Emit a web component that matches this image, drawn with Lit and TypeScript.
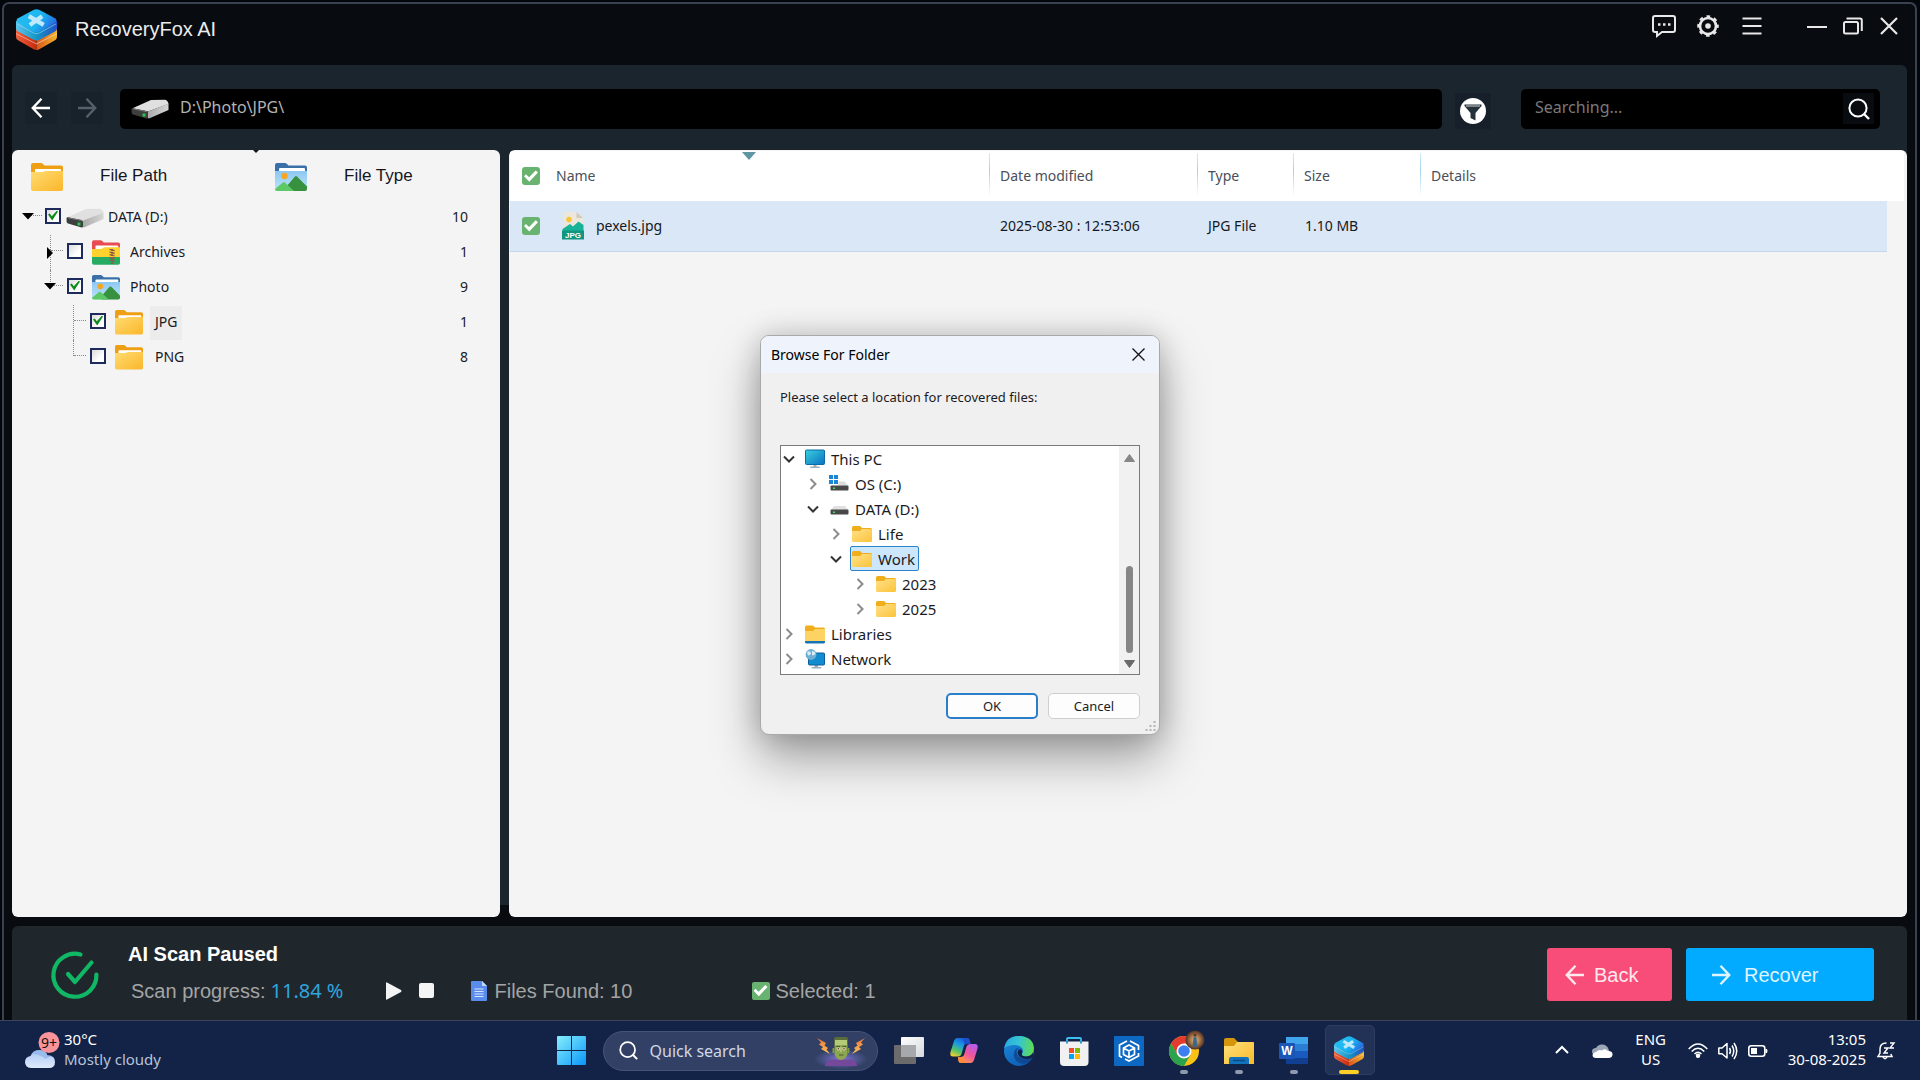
import { LitElement, html, css, svg, nothing, type TemplateResult } from "lit";
import { customElement, property, state } from "lit/decorators.js";
import { classMap } from "lit/directives/class-map.js";

/* ---------- icons ---------- */

const logo = (size: number) => html`<svg width=${size} height=${size} viewBox="0 0 40 40" aria-hidden="true">
  <defs>
    <linearGradient id="lg-red" x1="0" x2="1"><stop offset="0" stop-color="#f0603c" /><stop offset="1" stop-color="#c92a0c" /></linearGradient>
    <linearGradient id="lg-yel" x1="0" x2="1"><stop offset="0" stop-color="#d8541a" /><stop offset="1" stop-color="#f3b62c" /></linearGradient>
    <linearGradient id="lg-side" x1="0" x2="1"><stop offset="0" stop-color="#59c6ee" /><stop offset=".5" stop-color="#1795c4" /><stop offset="1" stop-color="#2350c8" /></linearGradient>
    <linearGradient id="lg-top" x1="0" x2="1" y1=".3" y2=".7"><stop offset="0" stop-color="#28bdf2" /><stop offset=".55" stop-color="#18b4f0" /><stop offset="1" stop-color="#2b5fe0" /></linearGradient>
  </defs>
  <path d="M0 19 L20 28 V40 Q18.500 40 16 38.500 L2 30.500 Q0 29.500 0 27 Z" fill="url(#lg-red)" />
  <path d="M40 19 L20 28 V40 Q21.500 40 24 38.500 L38 30.500 Q40 29.500 40 27 Z" fill="url(#lg-yel)" />
  <path d="M0 24 L20 34 L40 24" stroke="#fff" stroke-opacity=".45" fill="none" />
  <path d="M0 12 L20 6 L40 12 V19 Q40 21 38 22 L23 30 Q20 31.500 17 30 L2 22 Q0 21 0 19 Z" fill="url(#lg-side)" />
  <path d="M2 9 L17 1 Q20 -.5 23 1 L38 9 Q41 11 38 13.500 L23 22 Q20 23.500 17 22 L2 13.500 Q-1 11 2 9 Z" fill="url(#lg-top)" />
  <path d="M1 14.500 L17 23.300 Q20 24.700 23 23.300 L39 14.500" stroke="#8fe3ff" stroke-opacity=".6" fill="none" />
  <path d="M12.500 7 L27 15.500 M25.500 7 L13.500 15.500" stroke="#bfe9fb" stroke-width="4.200" />
</svg>`;

const driveIcon = html`<svg width="38" height="20" viewBox="0 0 38 20" aria-hidden="true">
  <defs><linearGradient id="dr" x1="0" x2="1"><stop offset="0" stop-color="#a9a9a9" /><stop offset="1" stop-color="#d6d6d6" /></linearGradient></defs>
  <path d="M1 9.500 L20 1 L34 .800 Q37 1.500 37.500 5 L17 12.500 Z" fill="#e0e0e0" />
  <path d="M17 12.500 L37.500 4.800 V11 L18 19.500 Q16.500 19.500 16.500 17 Z" fill="url(#dr)" />
  <path d="M.500 10 Q.700 9 2 9.300 L15.500 12 Q17 12.500 17 14 V18.500 Q17 19.700 15.500 19.400 L2 15.500 Q.600 15 .600 13.500 Z" fill="#3c3f3e" />
  <path d="M2 9.800 L16 12.700" stroke="#777" fill="none" />
  <rect x="11.500" y="14.500" width="3" height="3" fill="#2cc44c" />
</svg>`;

const folderIcon = (w: number) => html`<svg width=${w} height=${(w * 7) / 8} viewBox="0 0 32 28" aria-hidden="true">
  <defs><linearGradient id="fo" x1="0" y1="0" x2="1" y2="1"><stop offset="0" stop-color="#ffdc72" /><stop offset="1" stop-color="#fbb62a" /></linearGradient></defs>
  <path d="M0 2 Q0 0 2 0 H10 Q11 0 12 1 L13.500 2.500 H30 Q32 2.500 32 4.500 V20 H0 Z" fill="#ee9f14" />
  <rect x="4" y="6" width="26" height="6" rx="1" fill="#fff" />
  <path d="M0 9 H11 Q12 9 13 8.500 Q14 8 15 8 H32 V26 Q32 28 30 28 H2 Q0 28 0 26 Z" fill="url(#fo)" />
</svg>`;

const photoIcon = (w: number) => html`<svg width=${w} height=${(w * 7) / 8} viewBox="0 0 32 28" aria-hidden="true">
  <defs><linearGradient id="ph" x1="0" y1="0" x2="0" y2="1"><stop offset="0" stop-color="#8cc8f2" /><stop offset="1" stop-color="#bfe4fb" /></linearGradient></defs>
  <path d="M0 2 Q0 0 2 0 H10 Q11 0 12 1 L13.500 2.500 H30 Q32 2.500 32 4.500 V12 H0 Z" fill="#3a70a8" />
  <rect x="4" y="5" width="26" height="6" rx="1" fill="#fff" />
  <path d="M0 8 H32 V26 Q32 28 30 28 H2 Q0 28 0 26 Z" fill="url(#ph)" />
  <circle cx="9.500" cy="13" r="3.200" fill="#f5a623" />
  <path d="M11 24 L20 13.500 Q21 12.500 22 13.500 L32 23.500 V26 Q32 28 30 28 H11 Z" fill="#38913f" />
  <path d="M0 26 L8 19.500 Q9 18.800 10 19.500 L19 28 H2 Q0 28 0 26 Z" fill="#5cc866" />
</svg>`;

const archiveIcon = html`<svg width="28" height="25" viewBox="0 0 32 28" aria-hidden="true">
  <path d="M0 2 Q0 0 2 0 H10 Q11 0 12 1 L13.500 2.500 H30 Q32 2.500 32 4.500 V12 H0 Z" fill="#e84c52" />
  <rect x="4" y="6" width="26" height="6" rx="1" fill="#fff" />
  <path d="M0 10 H11 L14 8 H32 V19 H0 Z" fill="#fdd22e" />
  <path d="M0 19 H32 V26 Q32 28 30 28 H2 Q0 28 0 26 Z" fill="#27ab63" />
  <path d="M20 10.500 L26 12 M20 13.500 L26 15 M20 16.500 L26 18 M20 19.500 L26 21 M20 22.500 L26 24" stroke="#8a5a44" stroke-width="1.400" />
  <path d="M23 10 V27" stroke="#8a5a44" stroke-width="2.500" stroke-dasharray="2 1" />
</svg>`;

const arrow = (dir: "left" | "right", w = 20) => html`<svg width=${w} height="20" viewBox="0 0 20 20" aria-hidden="true" fill="none" stroke="currentColor" stroke-width="2.400">
  ${dir === "left" ? svg`<path d="M10.500 .800 L1.800 10 L10.500 19.200 M1.800 10 H19" />` : svg`<path d="M9.500 .800 L18.200 10 L9.500 19.200 M18.200 10 H1" />`}
</svg>`;

const magnifier = (s: number, w: number) => html`<svg width=${s} height=${s} viewBox="0 0 22 22" aria-hidden="true" fill="none" stroke="currentColor" stroke-width=${w}>
  <circle cx="10" cy="10" r="8.600" /><path d="M16 16 L21 21" stroke-width=${w + 0.4} />
</svg>`;

const jpgIcon = html`<svg width="22" height="28" viewBox="0 0 22 28" aria-hidden="true">
  <path d="M2 0 H14.500 L21 6 V22 H2 Z" fill="#ece6dc" /><path d="M14.500 0 L21 6 H14.500 Z" fill="#d3cabd" />
  <circle cx="7" cy="7.500" r="2.700" fill="#f8c630" />
  <path d="M.500 20 V17 L8 12 L11 14.500 L16.500 9.500 L21.500 13 V20 Z" fill="#17b298" />
  <path d="M0 18.500 H22 V27.500 H0 Z" fill="#12957e" />
  <text x="11" y="26" font-family="Liberation Sans, sans-serif" font-weight="700" font-size="8" fill="#fff" text-anchor="middle">JPG</text>
</svg>`;

/* ---------- folder-picker icons ---------- */

const pickIcons: Record<string, TemplateResult> = {
  folder: html`<svg width="20" height="18" viewBox="0 0 20 18" aria-hidden="true">
    <defs><linearGradient id="pf" x1="0" y1="0" x2="1" y2="1"><stop offset="0" stop-color="#ffe08a" /><stop offset="1" stop-color="#fbc43a" /></linearGradient></defs>
    <path d="M0 2.500 Q0 1 1.500 1 H7.500 Q8.500 1 9 1.800 L10 3 H18.500 Q20 3 20 4.500 V10 H0 Z" fill="#f0ae1c" />
    <path d="M0 6 H8 L10 4 H18.500 Q20 4 20 5.500 V15.500 Q20 17 18.500 17 H1.500 Q0 17 0 15.500 Z" fill="url(#pf)" />
  </svg>`,
  pc: html`<svg width="20" height="20" viewBox="0 0 20 20" aria-hidden="true">
    <defs><linearGradient id="pc" x1="0" y1="0" x2="1" y2="1"><stop offset="0" stop-color="#3ad0df" /><stop offset="1" stop-color="#0a72c0" /></linearGradient></defs>
    <path d="M8.500 15 H11.500 V18 H8.500 Z" fill="#9fb0bd" /><rect x="5" y="17.500" width="10" height="1.500" rx=".7" fill="#9fb0bd" />
    <rect x=".500" y="1" width="19" height="14.500" rx="1" fill="url(#pc)" stroke="#0b6ba5" />
  </svg>`,
  os: html`<svg width="20" height="18" viewBox="0 0 20 18" aria-hidden="true">
    <path d="M0 0 H4 V4 H0 Z M5 0 H9 V4 H5 Z M0 5 H4 V9 H0 Z M5 5 H9 V9 H5 Z" fill="#1a86d8" />
    <path d="M9.500 10.500 V6.500 H15.500 L19 10.500 Z" fill="#dcdcdc" /><rect x="1.500" y="10.500" width="18" height="5" rx="1" fill="#484848" /><rect x="4" y="12.500" width="2" height="1.500" fill="#3be25a" />
  </svg>`,
  drive: html`<svg width="20" height="18" viewBox="0 0 20 18" aria-hidden="true">
    <path d="M2 10 L5 6 H16 L19 10 Z" fill="#e0e0e0" /><rect x="1.500" y="9.500" width="18" height="5" rx="1" fill="#484848" /><rect x="4" y="11.500" width="2" height="1.500" fill="#3be25a" />
  </svg>`,
  lib: html`<svg width="20" height="20" viewBox="0 0 20 20" aria-hidden="true">
    <path d="M0 3 Q0 1.500 1.500 1.500 H8 L10 3.500 H18.500 Q20 3.500 20 5 V12 H0 Z" fill="#f0ae1c" />
    <path d="M0 7 H8 L10 5 H20 V18 H0 Z" fill="#fdd463" /><path d="M0 17 H20 V18 Q20 19.500 18.500 19.500 H1.500 Q0 19.500 0 18 Z" fill="#1474b8" />
  </svg>`,
  net: html`<svg width="20" height="20" viewBox="0 0 20 20" aria-hidden="true">
    <path d="M9.500 16 H13 V18.500 H9.500 Z" fill="#9fb0bd" /><rect x="6.500" y="18" width="10" height="1.500" rx=".7" fill="#9fb0bd" />
    <rect x="3.500" y="4" width="16" height="12" rx="1" fill="#128bd0" stroke="#0c5f9c" />
    <circle cx="6" cy="5.500" r="5.400" fill="#6db0d4" /><path d="M2 3 Q5 1 6 4 Q6 6 3 6.500 Z M7 2 Q10 2 10.500 5 Q9 7 7 6 Z" fill="#d8ebf5" />
  </svg>`,
};

/* ---------- scan tree ---------- */

interface ScanNode { name: string; count: number; depth: number; checked: boolean; arrow: "open" | "closed" | ""; icon: TemplateResult; selected?: boolean; last?: boolean }

const scanNodes: ScanNode[] = [
  { name: "DATA (D:)", count: 10, depth: 0, checked: true, arrow: "open", icon: driveIcon },
  { name: "Archives", count: 1, depth: 1, checked: false, arrow: "closed", icon: archiveIcon },
  { name: "Photo", count: 9, depth: 1, checked: true, arrow: "open", icon: photoIcon(28), last: true },
  { name: "JPG", count: 1, depth: 2, checked: true, arrow: "", icon: folderIcon(28), selected: true },
  { name: "PNG", count: 8, depth: 2, checked: false, arrow: "", icon: folderIcon(28), last: true },
];

const baseStyles = css`
  *, *::before, *::after { box-sizing: border-box; }
  button, input { font: inherit; color: inherit; margin: 0; padding: 0; border: 0; background: none; }
  svg { display: block; flex: none; overflow: visible; }
`;

@customElement("scan-tree")
class ScanTree extends LitElement {
  static styles = [baseStyles, css`
    :host { display: flex; flex-direction: column; background: #f4f4f4; border-radius: 6px; overflow: hidden; color: #1a1a24; font: 15px/20px "Noto Sans", sans-serif; }
    .tabs { display: grid; grid-template-columns: 1fr 1fr; position: relative; }
    .tabs::after { content: ""; position: absolute; left: 50%; top: 0; margin-left: -3px; border: 3px solid transparent; border-top-color: #10161b; border-bottom: 0; }
    .tab { display: flex; align-items: center; gap: 37px; height: 50px; padding: 4px 0 0 19px; font: 17px/20px "Liberation Sans", sans-serif; color: #15151f; text-align: left; }
    .label { padding-bottom: 2px; }
    .list { list-style: none; margin: 0; padding: 0 32px 0 0; }
    .row { position: relative; display: flex; align-items: center; height: 35px; padding-left: 33px; }
    .d1 { padding-left: 55px; }
    .d2 { padding-left: 78px; }
    .twist { position: absolute; left: 10px; top: 12px; z-index: 1; }
    .d1 .twist { left: 32px; }
    .row::after { content: ""; position: absolute; border-top: 1px dotted #8a8a8a; width: 12px; left: 18px; top: 15px; }
    .d1::after { left: 39px; }
    .d2::after { left: 62px; }
    .d1::before, .d2::before { content: ""; position: absolute; border-left: 1px dotted #8a8a8a; top: 0; bottom: 0; left: 38px; }
    .d2::before { left: 61px; }
    .last::before { bottom: 19px; }
    .box { appearance: none; width: 16px; height: 16px; border: 2px solid #1f2a5c; background: linear-gradient(135deg, #dcdcdc, #fff 70%); flex: none; margin: 0 5px 4px 0; display: grid; }
    .d1 .box, .d2 .box { margin-right: 9px; }
    .box:checked::before { content: ""; margin: 1px; background: #0f8a1c; clip-path: polygon(0 40%, 18% 30%, 38% 58%, 88% 2%, 100% 10%, 42% 100%); }
    .name { display: flex; align-items: center; height: 34px; padding: 0 6px 1px 4px; font-size: 14px; }
    .d1 .name { margin-left: 6px; }
    .d2 .name { margin-left: 7px; padding: 0 5px 1px; }
    .selected { background: #ececec; }
    .count { margin-left: auto; font-size: 14px; padding-bottom: 1px; }
  `];

  render() {
    return html`
      <div class="tabs" role="tablist">
        <button class="tab" role="tab">${folderIcon(32)}<span class="label">File Path</span></button>
        <button class="tab" role="tab">${photoIcon(32)}<span class="label">File Type</span></button>
      </div>
      <ul class="list">
        ${scanNodes.map((n, i) => html`<li class=${classMap({ row: true, d1: n.depth === 1, d2: n.depth === 2, last: !!n.last })}>
          ${n.arrow === "open" ? html`<svg class="twist" width="12" height="8" viewBox="0 0 12 8"><path d="M0 1 H12 L6 7.500 Z" /></svg>` : nothing}
          ${n.arrow === "closed" ? html`<svg class="twist" width="12" height="12" viewBox="0 0 12 12"><path d="M3 0 V12 L9 6 Z" /></svg>` : nothing}
          <input class="box" type="checkbox" id="node-${i}" .checked=${n.checked} />
          ${n.icon}
          <label for="node-${i}" class=${classMap({ name: true, selected: !!n.selected })}>${n.name}</label>
          <span class="count">${n.count}</span>
        </li>`)}
      </ul>`;
  }
}

/* ---------- file table ---------- */

@customElement("file-table")
class FileTable extends LitElement {
  static styles = [baseStyles, css`
    :host { display: block; background: #f4f4f4; border-radius: 6px; overflow: hidden; font: 14px/20px "Noto Sans", sans-serif; padding: 1px 3px 0 1px; }
    .table { width: 100%; border-collapse: collapse; table-layout: fixed; }
    .c-check { width: 37px; } .c-name { width: 442px; } .c-date { width: 208px; } .c-type { width: 96px; } .c-size { width: 127px; } .c-edge { width: 17px; }
    .head { background: #fff; height: 50px; color: #4a4f5a; }
    .th { font-weight: 400; text-align: left; padding: 0 0 0 11px; position: relative; }
    .name { padding-left: 9px; }
    .th + .sep::before { content: ""; position: absolute; left: 0; top: 2px; bottom: 4px; width: 1px; background: linear-gradient(#d5edf6, #9fd6ee 40%, #fff); }
    .check { padding: 0 0 0 12px; }
    .box { appearance: none; width: 18px; height: 18px; border-radius: 3px; background: #68b36f; display: grid; }
    .box:checked::before { content: ""; margin: 3px 2px; background: #fff; clip-path: polygon(0 52%, 14% 36%, 36% 60%, 84% 4%, 100% 20%, 38% 98%); }
    .sort { position: absolute; left: 195px; top: 1px; }
    .file { height: 50px; color: #15181e; }
    .td { background: #dae7f6; border-bottom: 1px solid #c3d5ea; padding: 0 0 0 11px; }
    .first { padding-left: 12px; }
    .entry { display: flex; align-items: center; gap: 12px; padding-left: 4px; }
    .size { padding-left: 12px; }
  `];

  render() {
    return html`<table class="table">
      <colgroup><col class="c-check" /><col class="c-name" /><col class="c-date" /><col class="c-type" /><col class="c-size" /><col /><col class="c-edge" /></colgroup>
      <thead><tr class="head">
        <th class="check"><input class="box" type="checkbox" aria-label="Select all" checked /></th>
        <th class="th name">Name<svg class="sort" width="14" height="8" viewBox="0 0 14 8"><path d="M0 0 H14 L7 8 Z" fill="#5d95a3" /></svg></th>
        <th class="th sep">Date modified</th><th class="th sep">Type</th><th class="th sep">Size</th><th class="th sep">Details</th><td></td>
      </tr></thead>
      <tbody><tr class="file">
        <td class="td first"><input class="box" type="checkbox" aria-label="Select pexels.jpg" checked /></td>
        <td class="td"><span class="entry">${jpgIcon}pexels.jpg</span></td>
        <td class="td">2025-08-30 : 12:53:06</td><td class="td">JPG File</td><td class="td size">1.10 MB</td><td class="td"></td><td></td>
      </tr></tbody>
    </table>`;
  }
}

/* ---------- folder dialog ---------- */

const folders = [
  { name: "This PC", icon: "pc", depth: 0, open: true },
  { name: "OS (C:)", icon: "os", depth: 1, open: false },
  { name: "DATA (D:)", icon: "drive", depth: 1, open: true },
  { name: "Life", icon: "folder", depth: 2, open: false },
  { name: "Work", icon: "folder", depth: 2, open: true },
  { name: "2023", icon: "folder", depth: 3, open: false },
  { name: "2025", icon: "folder", depth: 3, open: false },
  { name: "Libraries", icon: "lib", depth: 0, open: false },
  { name: "Network", icon: "net", depth: 0, open: false },
];

@customElement("folder-dialog")
class FolderDialog extends LitElement {
  @state() private selected = "Work";

  static styles = [baseStyles, css`
    :host { display: block; box-sizing: border-box; width: 400px; border: 1px solid #a9a9ab; border-radius: 9px; background: #f0f0f0; overflow: hidden; color: #1b1b1f; font: 13px/20px "Noto Sans", sans-serif; box-shadow: 0 24px 48px rgba(0, 0, 0, .34), 0 0 28px rgba(0, 0, 0, .18); }
    .bar { display: flex; align-items: center; justify-content: space-between; height: 37px; padding: 0 14px 0 10px; background: #eff3fb; color: #000; }
    .title { margin: 0; font: 14px/20px "Noto Sans", sans-serif; }
    .x { width: 13px; height: 13px; }
    .body { position: relative; padding: 14px 19px 15px; }
    .prompt { margin: 0 0 38px; }
    .pane { display: flex; height: 230px; border: 1px solid #7a7a7a; background: #fff; }
    .list { list-style: none; margin: 0; padding: 0; flex: 1; font-size: 15px; }
    .row { display: flex; align-items: center; height: 25px; padding-left: 2px; }
    .chev { width: 12px; height: 12px; margin-right: 8px; color: #8c8c8c; }
    .open .chev { color: #333; }
    .pick { display: flex; align-items: center; gap: 6px; height: 25px; padding: 0 3px 0 1px; border: 1px solid transparent; border-radius: 2px; }
    .sel { background: #cce6fb; border-color: #2a83cc; }
    .i1 { padding-left: 26px; } .i2 { padding-left: 49px; } .i3 { padding-left: 73px; }
    .scroll { display: flex; flex-direction: column; align-items: center; width: 20px; padding: 8px 0 6px; background: #f1f1f1; }
    .thumb { width: 7px; height: 87px; border-radius: 4px; background: #868686; margin: auto 0 7px; }
    .actions { display: flex; justify-content: flex-end; gap: 10px; margin-top: 18px; }
    .btn { width: 92px; height: 26px; border: 1px solid #cfcfcf; border-radius: 5px; background: #fdfdfd; }
    .ok { border: 2px solid #2b7fca; }
    .grip { position: absolute; right: 3px; bottom: 2px; }
  `];

  render() {
    return html`
      <div class="bar"><h2 class="title">Browse For Folder</h2>
        <button class="x" aria-label="Close"><svg width="13" height="13" viewBox="0 0 13 13" stroke="#111" stroke-width="1.300"><path d="M.500 .500 L12.500 12.500 M12.500 .500 L.500 12.500" /></svg></button></div>
      <div class="body">
        <p class="prompt">Please select a location for recovered files:</p>
        <div class="pane">
          <ul class="list">${folders.map((f) => html`<li class=${classMap({ row: true, open: f.open, i1: f.depth === 1, i2: f.depth === 2, i3: f.depth === 3 })}>
            <svg class="chev" viewBox="0 0 12 12" fill="none" stroke="currentColor" stroke-width="2">${f.open ? svg`<path d="M1 3.500 L6 8.500 L11 3.500" />` : svg`<path d="M3.500 1 L8.500 6 L3.500 11" />`}</svg>
            <button class=${classMap({ pick: true, sel: f.name === this.selected })} @click=${() => (this.selected = f.name)}>${pickIcons[f.icon]}${f.name}</button>
          </li>`)}</ul>
          <div class="scroll">
            <svg width="11" height="8" viewBox="0 0 11 8"><path d="M5.500 .500 L10.500 7.500 H.500 Z" fill="#868686" stroke="#868686" stroke-linejoin="round" /></svg>
            <div class="thumb"></div>
            <svg width="11" height="8" viewBox="0 0 11 8"><path d="M5.500 7.500 L10.500 .500 H.500 Z" fill="#6a6a6a" stroke="#6a6a6a" stroke-linejoin="round" /></svg>
          </div>
        </div>
        <div class="actions"><button class="btn ok">OK</button><button class="btn">Cancel</button></div>
        <svg class="grip" width="11" height="11" viewBox="0 0 11 11" fill="#b4b4b4"><path d="M8.500 0 h2 v2 h-2 z M8.500 4 h2 v2 h-2 z M8.500 8 h2 v2 h-2 z M4.500 4 h2 v2 h-2 z M4.500 8 h2 v2 h-2 z M.500 8 h2 v2 h-2 z" /></svg>
      </div>`;
  }
}

/* ---------- taskbar ---------- */

const apps: { name: string; state: "" | "running" | "active"; icon: TemplateResult }[] = [
  { name: "Task view", state: "", icon: html`<svg width="30" height="30" viewBox="0 0 30 30">
      <defs><linearGradient id="tv" x1="0" y1="0" x2="1" y2="1"><stop offset="0" stop-color="#fff" /><stop offset="1" stop-color="#d6d8dc" /></linearGradient></defs>
      <rect x="0" y="9" width="22" height="19" rx="1" fill="#6b6b6b" /><rect x="7" y="1" width="23" height="20" rx="1" fill="url(#tv)" /><rect x="7" y="9" width="15" height="12" fill="#a6a8ab" /></svg>` },
  { name: "Copilot", state: "", icon: html`<svg width="30" height="30" viewBox="0 0 30 30">
      <defs>
        <linearGradient id="ca" x1=".7" y1="0" x2=".2" y2="1"><stop offset="0" stop-color="#1756d8" /><stop offset=".4" stop-color="#1b9de0" /><stop offset=".7" stop-color="#52c26a" /><stop offset="1" stop-color="#f4cf2c" /></linearGradient>
        <linearGradient id="cb" x1=".8" y1="0" x2=".2" y2="1"><stop offset="0" stop-color="#b25cf0" /><stop offset=".5" stop-color="#f0559a" /><stop offset="1" stop-color="#ff9b50" /></linearGradient>
      </defs>
      <path d="M8.500 2 H18 Q20 2 20.500 4 L21.500 7.500 H18 Q15.500 7.500 14.800 10 L12.500 18 Q11.800 20.500 9 20.500 H4 Q.500 20.500 1.500 16 L5 5 Q6 2 8.500 2 Z" fill="url(#ca)" />
      <path d="M21.500 27 H12 Q10 27 9.500 25 L9 21 H12 Q14.500 21 15.200 18.500 L17.500 10.500 Q18.200 8 21 8 H26 Q29.500 8 28.500 12.500 L25 24 Q24 27 21.500 27 Z" fill="url(#cb)" />
      <path d="M14 2 H18 Q20 2 20.500 4 L21.500 7.500 H18 Q16.500 7.500 15.500 9 Z" fill="#1c4fd0" /><path d="M9 21 H12 Q13.500 21 14.500 20 L16 27 H12 Q10 27 9.500 25 Z" fill="#ff8a3c" /></svg>` },
  { name: "Edge", state: "", icon: html`<svg width="30" height="30" viewBox="0 0 30 30">
      <defs>
        <linearGradient id="ea" x1="0" y1=".3" x2="1" y2=".4"><stop offset="0" stop-color="#2aa9e6" /><stop offset=".5" stop-color="#36c5d0" /><stop offset="1" stop-color="#5fdc52" /></linearGradient>
        <linearGradient id="eb" x1="0" y1="0" x2=".6" y2="1"><stop offset="0" stop-color="#1d8fe0" /><stop offset="1" stop-color="#0d5cb4" /></linearGradient>
      </defs>
      <circle cx="15" cy="15" r="15" fill="url(#eb)" />
      <path d="M.200 12.500 Q2 0 15 0 Q29 .500 30 12 Q30 20 22 20.500 Q17 20.500 18 17.500 Q20 15 18 12 Q15 8.500 9.500 9 Q2.500 9.500 .200 12.500 Z" fill="url(#ea)" />
      <path d="M11 14 Q8 20 12.500 25 Q17 29 23 27 Q27 25 28.500 21.500 Q24 24 19.500 23 Q12.500 21 12.500 16 Q12.500 13 15 12 Q12.500 12 11 14 Z" fill="#123f86" opacity=".75" />
      <path d="M18 17.500 Q17 20.500 22 20.500 Q27 20.300 29 16.500 L29.500 21 Q26 23.500 22 23 Q14.500 22 13.500 16.500 Q14.500 12.500 17 13.500 Q19 14.800 18 17.500 Z" fill="#122346" /></svg>` },
  { name: "Microsoft Store", state: "", icon: html`<svg width="30" height="30" viewBox="0 0 30 30">
      <path d="M8 8 V3 Q8 2 9 2 H21 Q22 2 22 3 V8" fill="none" stroke="#3cc0f0" stroke-width="1.800" />
      <path d="M1 5.500 H29.500 V26 Q29.500 30 25.500 30 H5 Q1 30 1 26 Z" fill="#f1f1f1" />
      <path d="M8 5 V7.500 M22 5 V7.500" stroke="#1b8fd0" stroke-width="1.800" />
      <path d="M10 12 h5 v5 h-5 z" fill="#f25022" /><path d="M16 12 h5 v5 h-5 z" fill="#7fba00" /><path d="M10 18 h5 v5 h-5 z" fill="#00a4ef" /><path d="M16 18 h5 v5 h-5 z" fill="#ffb900" /></svg>` },
  { name: "Packages", state: "", icon: html`<svg width="30" height="30" viewBox="0 0 30 30">
      <rect width="30" height="30" rx="1" fill="#0c68c2" />
      <g fill="none" stroke="#fff" stroke-width="1.700"><path d="M15 9 L20.500 12 V18.500 L15 21.500 L9.500 18.500 V12 Z M9.500 12 L15 15 L20.500 12 M15 15 V21.500" />
      <path d="M13 5 L5.500 9 V20 L8 21.500 M16 5 L24.500 9.500 V14 M24.500 17 V20 L15 25 L11 23" /></g></svg>` },
  { name: "Chrome", state: "running", icon: html`<svg width="30" height="30" viewBox="0 0 30 30">
      <circle cx="15" cy="15" r="15" fill="#fbc116" />
      <path d="M2 7.500 A15 15 0 0 1 28 7.500 L15 7.500 L8.500 18.700 Z" fill="#e33b2e" />
      <path d="M2 7.500 A15 15 0 0 0 15 30 L21.500 18.700 H8.500 Z" fill="#2ba24c" />
      <circle cx="15" cy="15" r="7.500" fill="#fff" /><circle cx="15" cy="15" r="5.800" fill="#3c7ff0" />
      <defs><radialGradient id="av"><stop offset="0" stop-color="#e3c08c" /><stop offset=".6" stop-color="#9c6a42" /><stop offset="1" stop-color="#4c3022" /></radialGradient></defs>
      <circle cx="26" cy="4" r="9.500" fill="url(#av)" /><path d="M24.500 2 Q26 -1 27.500 2 L28.500 11 H23.500 Z" fill="#3d6785" /><circle cx="26" cy="-1" r="1.600" fill="#5c3a28" /></svg>` },
  { name: "File Explorer", state: "running", icon: html`<svg width="30" height="30" viewBox="0 0 30 30">
      <defs><linearGradient id="fe" x1="0" y1="0" x2="1" y2="1"><stop offset="0" stop-color="#ffe07a" /><stop offset="1" stop-color="#f8bb2c" /></linearGradient></defs>
      <path d="M0 4 Q0 2 2 2 H10 L14 6 H30 V14 H0 Z" fill="#d6960c" /><path d="M0 10 H10 L13 6 H28.500 Q30 6 30 7.500 V28 H0 Z" fill="url(#fe)" />
      <path d="M5 28 V23 Q5 21 7 21 H23 Q25 21 25 23 V28 Z" fill="#1272bc" /><path d="M9 24.500 H21" stroke="#0b4a85" stroke-width="1.500" /></svg>` },
  { name: "Word", state: "running", icon: html`<svg width="30" height="30" viewBox="0 0 30 30">
      <rect x="7" y="1" width="22" height="7" fill="#41a5ee" /><rect x="7" y="8" width="22" height="7" fill="#2b7cd3" /><rect x="7" y="15" width="22" height="7" fill="#185abd" /><rect x="7" y="22" width="22" height="6" fill="#103f91" />
      <rect x="0" y="7" width="16" height="16" rx="1" fill="#1a56b8" />
      <text x="8" y="19" font-family="Liberation Sans, sans-serif" font-weight="700" font-size="12" fill="#fff" text-anchor="middle">W</text></svg>` },
  { name: "RecoveryFox AI", state: "active", icon: logo(30) },
];

@customElement("task-bar")
class TaskBar extends LitElement {
  static styles = [baseStyles, css`
    :host { display: grid; grid-template-columns: 1fr auto 1fr; align-items: center; height: 60px; border-top: 1px solid #3b4659; background: #122347; color: #fff; font: 16px/20px "Noto Sans", sans-serif; }
    .weather { display: flex; align-items: center; gap: 5px; padding-left: 25px; text-align: left; justify-self: start; }
    .now { padding-bottom: 4px; }
    .temp, .sky { display: block; font-size: 15px; }
    .sky { color: #b8c2d8; }
    .mid { display: flex; align-items: center; height: 59px; }
    .slot { display: flex; flex-direction: column; align-items: center; justify-content: center; position: relative; width: 55px; height: 59px; }
    .running::after, .active::after { content: ""; position: absolute; bottom: 6px; width: 8px; height: 4px; border-radius: 2px; background: #8f99ad; }
    .active::after { width: 20px; background: #fbd024; }
    .active::before { content: ""; position: absolute; inset: 4px 2px 5px 3px; border-radius: 5px; border: 1px solid #2e3c60; background: #223156; }
    .slot svg { position: relative; }
    .search { display: flex; align-items: center; width: 275px; height: 40px; margin: 0 4px; padding: 0 11px 0 15px; border: 1px solid #46537a; border-radius: 20px; background: #324065; }
    .field { flex: 1; width: 0; margin-left: 12px; outline: 0; font-size: 16px; }
    .field::placeholder { color: #d0d7e6; opacity: 1; }
    .tray { display: flex; align-items: center; justify-content: flex-end; padding-right: 25px; }
    .lang { text-align: center; width: 40px; margin: 0 17px 0 18px; padding-bottom: 4px; font-size: 15px; }
    .status { display: flex; align-items: center; gap: 10px; }
    .clock { text-align: right; margin: 0 11px 0 20px; padding-bottom: 4px; font-size: 15px; }
    .cloud { margin-left: 23px; }
    .up { margin-bottom: 2px; }
  `];

  render() {
    return html`
      <button class="weather" aria-label="Weather">
        <svg width="34" height="40" viewBox="0 0 34 40">
          <defs><linearGradient id="wc" x1="0" y1="0" x2="0" y2="1"><stop offset="0" stop-color="#a9c6f4" /><stop offset="1" stop-color="#dfeafb" /></linearGradient></defs>
          <path d="M6 37 Q0 36.500 0 31 Q0 26 5.500 25 Q8 18.500 15 19 Q21 19.500 22.500 24.500 Q30 24 30 31 Q30 37 24 37 Z" fill="url(#wc)" />
          <path d="M8 23 Q18 24 20 28 L27 25 Q23 24 22.500 24.500 Q20 19 15 19 Q9 19 7 23 Z" fill="#8fb2ea" opacity=".7" />
          <circle cx="24" cy="11.500" r="10.500" fill="#f9959a" />
          <text x="24" y="16.500" font-family="Noto Sans, sans-serif" font-size="14" fill="#111" text-anchor="middle">9+</text>
        </svg>
        <span class="now"><span class="temp">30°C</span><span class="sky">Mostly cloudy</span></span>
      </button>
      <div class="mid">
        <button class="slot" aria-label="Start"><svg width="29" height="29" viewBox="0 0 29 29">
          <defs><linearGradient id="st" x1="0" y1="0" x2="29" y2="29" gradientUnits="userSpaceOnUse"><stop offset="0" stop-color="#86effd" /><stop offset="1" stop-color="#0a96f8" /></linearGradient></defs>
          <path d="M0 1 Q0 0 1 0 H14 V14 H0 Z M15 0 H28 Q29 0 29 1 V14 H15 Z M0 15 H14 V29 H1 Q0 29 0 28 Z M15 15 H29 V28 Q29 29 28 29 H15 Z" fill="url(#st)" /></svg></button>
        <div class="search">${magnifier(19, 2)}<input class="field" aria-label="Quick search" placeholder="Quick search" />
          <svg width="50" height="30" viewBox="0 0 50 30">
            <defs>
              <radialGradient id="glow"><stop offset="0" stop-color="#8a72e0" /><stop offset="1" stop-color="#6a78c0" stop-opacity="0" /></radialGradient>
              <linearGradient id="bolt" x1="0" y1="0" x2="0" y2="1"><stop offset="0" stop-color="#e8743a" /><stop offset="1" stop-color="#ffc25a" /></linearGradient>
            </defs>
            <ellipse cx="25" cy="23" rx="27" ry="10" fill="url(#glow)" />
            <path d="M9 30 Q9 24 17 23.500 H34 Q41 24 41 30 Z" fill="#76489c" />
            <path d="M18.500 6 H31.500 V18 Q30 23.500 25 24 Q20 23.500 18.500 18 Z" fill="#8da650" /><path d="M16.500 12 H18.500 V17 H16.500 Z M31.500 12 H33.500 V17 H31.500 Z" fill="#7d9a40" />
            <path d="M18 8 V3 Q18 1 20 1 H30 Q32 1 32 3 V8 L30.500 6 H19.500 Z" fill="#5a6b3c" /><path d="M19 4 H31 V9 H19 Z" fill="#b2cc78" />
            <path d="M20.500 10.500 H24 M26.500 10.500 H30 M23 19 H27.500" stroke="#4a5a30" stroke-width="1.200" /><path d="M25 11 V16" stroke="#b8cf80" stroke-width="1.400" />
            <circle cx="22.300" cy="12.800" r="1.600" fill="#dfe3c0" /><circle cx="28" cy="12.800" r="1.600" fill="#dfe3c0" /><circle cx="22.300" cy="12.800" r=".8" fill="#6b2a30" /><circle cx="28" cy="12.800" r=".8" fill="#6b2a30" />
            <path d="M1 2 L10 7 L8.500 9.500 L12 12 L10.500 13.500 L14 18 L5 13 L7 11 L3 8.500 L5 6.500 Z" fill="url(#bolt)" />
            <path d="M49 2 L40 7 L41.500 9.500 L38 12 L39.500 13.500 L36 18 L45 13 L43 11 L47 8.500 L45 6.500 Z" fill="url(#bolt)" />
          </svg></div>
        ${apps.map((a) => html`<button class="slot ${a.state}" aria-label=${a.name}>${a.icon}</button>`)}
      </div>
      <div class="tray">
        <svg class="up" width="14" height="9" viewBox="0 0 14 9" fill="none" stroke="#fff" stroke-width="2"><path d="M1 8 L7 2 L13 8" /></svg>
        <svg class="cloud" width="21" height="14" viewBox="0 0 21 14"><path d="M4 11 Q0 11 0 7.500 Q0 4 4 4 Q6 0 11 .500 Q15 1 16.500 5 L18 9 Z" fill="#9da6b5" /><path d="M4 14 Q.500 14 .500 11 Q1 8.500 4 8 Q7 5 10 6.500 Q13 4 16 7 Q21 7 20.500 11 Q20 14 16.500 14 Z" fill="#fff" /></svg>
        <span class="lang">ENG<br />US</span>
        <span class="status">
          <svg width="20" height="15" viewBox="0 0 20 15" fill="none" stroke="#fff" stroke-width="1.500"><path d="M.700 6 Q10 -4 19.300 6 M3.700 8.500 Q10 2 16.300 8.500 M6.500 11 Q10 7.500 13.500 11" /><circle cx="10" cy="12.800" r="1.500" fill="#fff" /></svg>
          <svg width="20" height="18" viewBox="0 0 20 18" fill="none" stroke="#fff" stroke-width="1.500" stroke-linejoin="round"><path d="M.800 6 H4 L9 1.500 V16 L4 11.800 H.800 Z M11.500 6 Q13.500 9 11.500 12 M14 3.500 Q17.500 9 14 14.500 M16 1 Q21.500 9 16 17" /></svg>
          <svg width="20" height="12" viewBox="0 0 20 12"><rect x=".800" y=".800" width="16" height="10.400" rx="2.500" fill="none" stroke="#fff" stroke-width="1.600" /><rect x="3" y="3" width="6" height="6" fill="#fff" /><path d="M17.500 4 H19 Q20 6 19 8 H17.500 Z" fill="#fff" /></svg>
        </span>
        <span class="clock">13:05<br />30-08-2025</span>
        <svg width="18" height="18" viewBox="0 0 18 18" fill="none" stroke="#fff" stroke-width="1.500"><path d="M9.500 1 Q3 1 3 7 V11 L1 14.500 H15 L13.800 12 M6 15 Q8 18.500 10 15" /><path d="M7 6 H11 L7 11 H11 M13 1 H17 L13 6 H17" stroke-width="1.400" /></svg>
      </div>`;
  }
}

/* ---------- application ---------- */

@customElement("app-root")
class AppRoot extends LitElement {
  @property() path = "D:\\Photo\\JPG\\";

  static styles = [baseStyles, css`
    :host { display: flex; flex-direction: column; position: relative; min-height: 100vh; background: #03060a; font: 20px/24px "Liberation Sans", sans-serif; color: #fff; }
    .window { flex: 1; display: flex; flex-direction: column; margin: 2px 3px 0 2px; border: 2px solid #3a4150; border-bottom: 0; border-radius: 7px 7px 0 0; background: #080b0f; padding: 0 8px; }
    .header { display: flex; align-items: center; height: 61px; padding: 0 0 11px 4px; }
    .brand { margin: 0 auto 0 18px; font: 20px/24px "Liberation Sans", sans-serif; color: #ececec; }
    .tools, .controls { display: flex; }
    .controls { margin-left: 25px; }
    .tool, .control { display: grid; place-items: center; width: 44px; height: 32px; margin-top: -6px; }
    .control { width: 36px; }
    .toolbar { display: flex; align-items: center; height: 85px; padding: 2px 27px 0 13px; background: #1a252d; border-radius: 6px 6px 0 0; font: 16px/20px "Noto Sans", sans-serif; }
    .nav { display: grid; place-items: center; width: 32px; height: 32px; background: #18222a; margin-bottom: 2px; }
    .fwd { margin: 0 17px 2px 14px; color: #56606a; }
    .path, .find { display: flex; align-items: center; height: 40px; border-radius: 5px; background: #000; }
    .path { flex: 1; padding-left: 11px; gap: 11px; color: #b4b4b4; }
    .text { flex: 1; width: 0; height: 36px; padding-bottom: 4px; outline: 0; }
    .text::placeholder { color: #7a7a7a; opacity: 1; }
    .filter { display: grid; place-items: center; width: 36px; height: 36px; margin: 4px 30px 0 13px; background: #17202a; }
    .find { width: 359px; padding: 0 6px 0 14px; }
    .go { display: grid; place-items: center; width: 31px; height: 31px; background: #080b0f; }
    .panes { flex: 1; display: grid; grid-template-columns: 488px 1fr; gap: 9px; background: linear-gradient(#1a252d 0 755px, #080b0f 755px); }
    .footer { display: flex; align-items: center; height: 94px; margin-top: 9px; padding: 3px 33px 0 39px; border-radius: 6px 6px 0 0; background: #20272c; color: #a3a4a5; }
    .scan { margin: 0 0 0 29px; padding-bottom: 5px; }
    .headline { margin: 0; padding-bottom: 13px; font: 700 20px/24px "Liberation Sans", sans-serif; color: #fff; }
    .line { display: flex; align-items: center; padding-left: 3px; }
    .percent { margin-left: 5px; width: 115px; color: #31a4de; font: 20px/24px "Noto Sans", sans-serif; }
    .stop { margin: 0 37px 0 17px; }
    .files { width: 265px; padding-left: 8px; }
    .mark { appearance: none; width: 18px; height: 18px; border-radius: 2px; background: #68b36f; display: grid; }
    .mark:checked::before { content: ""; margin: 3px 2px; background: #fff; clip-path: polygon(0 52%, 14% 36%, 36% 60%, 84% 4%, 100% 20%, 38% 98%); }
    .sel { padding-left: 6px; }
    .big { display: flex; align-items: center; height: 53px; border-radius: 3px; color: #fff; }
    .back { width: 125px; margin-left: auto; padding-left: 18px; gap: 9px; background: #f94d79; color: #ffe9ee; }
    .recover { width: 188px; margin-left: 14px; padding-left: 25px; gap: 13px; background: #02abff; color: #def4ff; }
    .modal { position: absolute; top: 335px; left: calc(50% - 200px); }
  `];

  render() {
    return html`
      <main class="window">
        <header class="header">
          ${logo(41)}<h1 class="brand">RecoveryFox AI</h1>
          <div class="tools">
            <button class="tool" aria-label="Feedback"><svg width="24" height="22" viewBox="0 0 24 22" fill="none" stroke="#e8e8e8" stroke-width="2"><path d="M3 1 H21 Q23 1 23 3 V15 Q23 17 21 17 H10 L5 21 V17 H3 Q1 17 1 15 V3 Q1 1 3 1 Z" /><path d="M6 9.500 H8.500 M11 9.500 H13.500 M16 9.500 H18.500" stroke-width="2.500" /></svg></button>
            <button class="tool" aria-label="Settings"><svg width="22" height="22" viewBox="0 0 22 22"><circle cx="11" cy="11" r="8" fill="none" stroke="#e8e8e8" stroke-width="2.600" /><circle cx="11" cy="11" r="9.800" fill="none" stroke="#e8e8e8" stroke-width="2" stroke-dasharray="3.700 4" stroke-dashoffset="1.800" /><circle cx="11" cy="11" r="2.800" fill="#e8e8e8" /></svg></button>
            <button class="tool" aria-label="Menu"><svg width="20" height="20" viewBox="0 0 20 20" stroke="#e8e8e8" stroke-width="2.200"><path d="M.500 2.500 H19.500 M.500 10 H19.500 M.500 17.500 H19.500" /></svg></button>
          </div>
          <div class="controls">
            <button class="control" aria-label="Minimize"><svg width="20" height="20" viewBox="0 0 20 20" stroke="#e8e8e8" stroke-width="2"><path d="M0 11 H20" /></svg></button>
            <button class="control" aria-label="Restore"><svg width="20" height="18" viewBox="0 0 20 18" fill="none" stroke="#e8e8e8" stroke-width="2"><rect x="1" y="5" width="14" height="11.500" rx="1.500" /><path d="M3.500 1.500 H17 Q18.800 1.500 18.800 3 V14" /></svg></button>
            <button class="control" aria-label="Close"><svg width="18" height="18" viewBox="0 0 18 18" stroke="#e8e8e8" stroke-width="2.200"><path d="M1 1 L17 17 M17 1 L1 17" /></svg></button>
          </div>
        </header>
        <div class="toolbar">
          <button class="nav" aria-label="Back">${arrow("left")}</button>
          <button class="nav fwd" aria-label="Forward">${arrow("right")}</button>
          <div class="path">${driveIcon}<input class="text" aria-label="Path" .value=${this.path} /></div>
          <button class="filter" aria-label="Filter"><svg width="26" height="26" viewBox="0 0 26 26"><circle cx="13" cy="13" r="13" fill="#fff" /><path d="M4.500 6.500 H21.500 V8 L15.500 15 V22.500 L10.500 20 V15 L4.500 8 Z" fill="#26323a" /><path d="M6 8 H20" stroke="#fff" stroke-width=".8" /></svg></button>
          <div class="find"><input class="text" aria-label="Search files" placeholder="Searching..." /><button class="go" aria-label="Search">${magnifier(22, 2)}</button></div>
        </div>
        <div class="panes"><scan-tree></scan-tree><file-table></file-table></div>
        <footer class="footer">
          <svg width="48" height="48" viewBox="0 0 48 48" fill="none" stroke="#10b865" stroke-width="4.200" stroke-linecap="round" stroke-linejoin="round"><path d="M29.500 3.500 A21.500 21.500 0 1 0 45.400 23.500" /><path d="M17 23 L24 31 L40.500 11.500" /></svg>
          <div class="scan">
            <h2 class="headline">AI Scan Paused</h2>
            <div class="line">Scan progress:<span class="percent">11.84 %</span>
              <button aria-label="Resume scan"><svg width="16" height="18" viewBox="0 0 16 18"><path d="M0 1 Q0 0 1 .500 L15 8 Q16 9 15 10 L1 17.500 Q0 18 0 17 Z" fill="#f4f4f4" /></svg></button>
              <button class="stop" aria-label="Stop scan"><svg width="15" height="15" viewBox="0 0 15 15"><rect width="15" height="15" rx="2" fill="#f4f4f4" /></svg></button>
              <svg width="16" height="20" viewBox="0 0 16 20"><path d="M1 0 H11 L16 5 V19 Q16 20 15 20 H1 Q0 20 0 19 V1 Q0 0 1 0 Z" fill="#5a8ceb" /><path d="M11 0 L16 5 H11 Z" fill="#c4d8ff" /><path d="M3.500 8 H12.500 M3.500 10.500 H12.500 M3.500 13 H12.500 M3.500 15.500 H12.500" stroke="#d8e5ff" /></svg>
              <span class="files">Files Found: 10</span>
              <input class="mark" type="checkbox" id="selected" checked /><label class="sel" for="selected">Selected: 1</label>
            </div>
          </div>
          <button class="big back">${arrow("left")}Back</button>
          <button class="big recover">${arrow("right")}Recover</button>
        </footer>
      </main>
      <task-bar></task-bar>
      <folder-dialog class="modal" role="dialog" aria-label="Browse For Folder"></folder-dialog>`;
  }
}
